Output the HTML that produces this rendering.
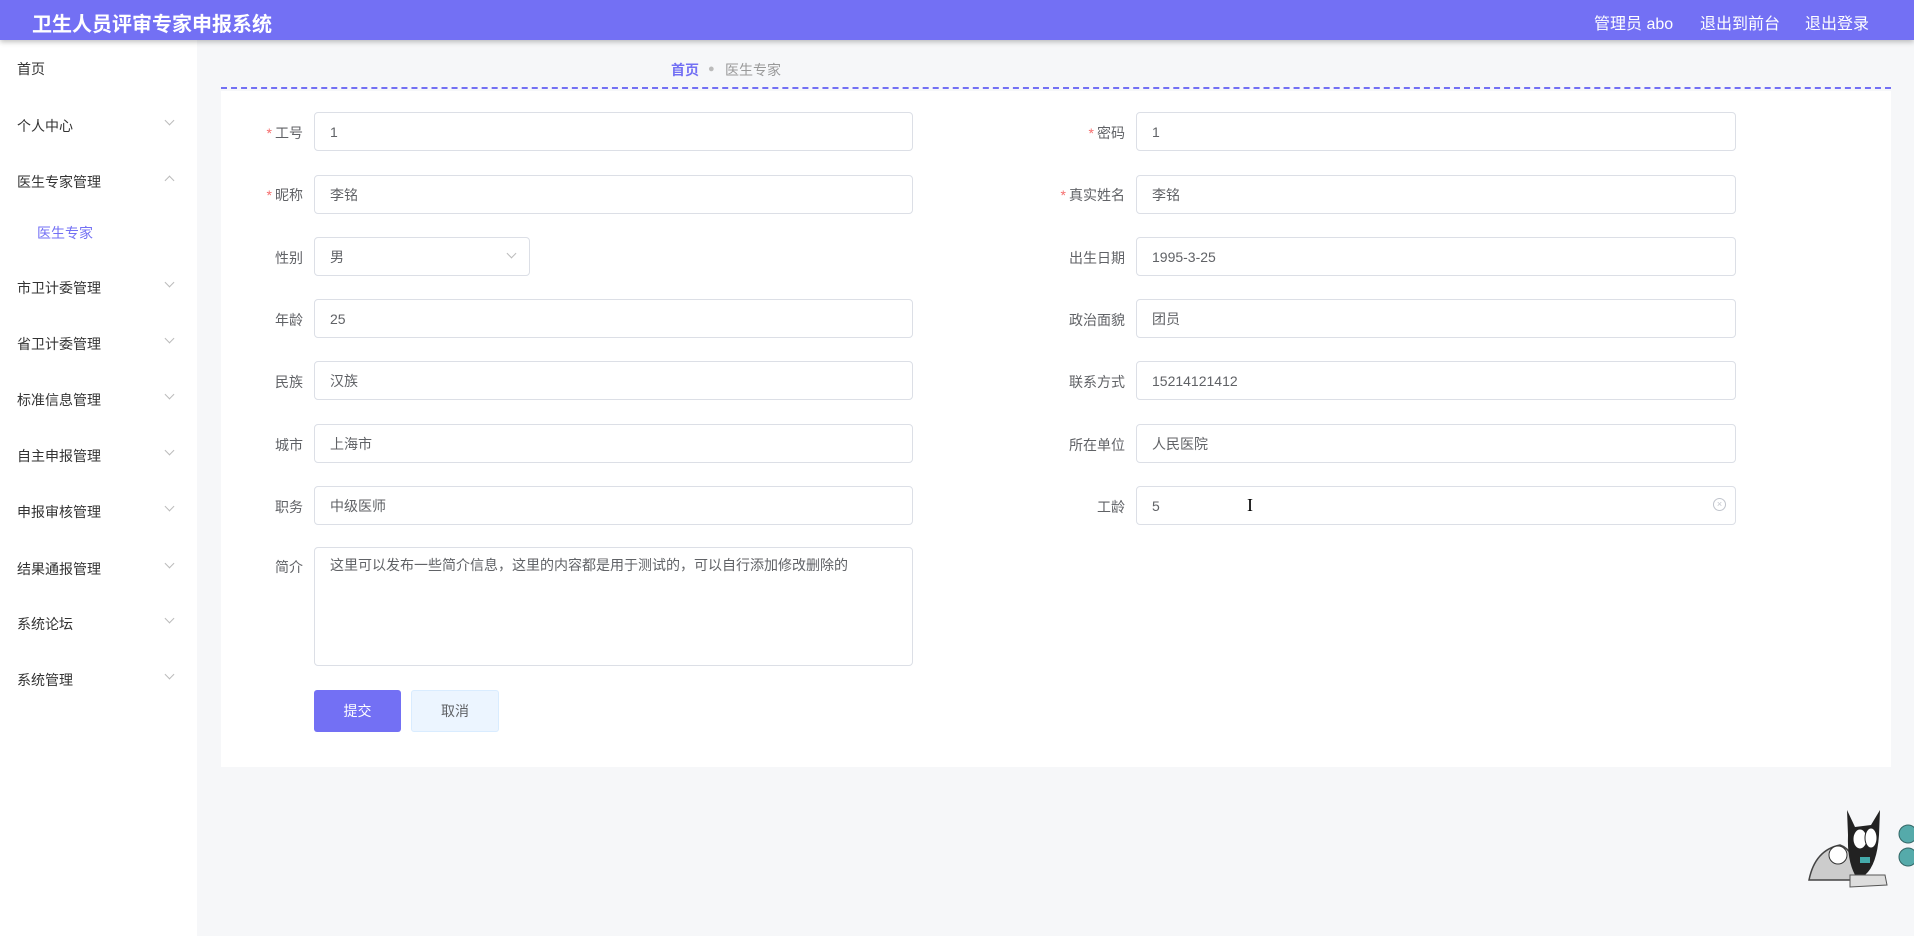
<!DOCTYPE html>
<html><head><meta charset="utf-8"><style>
*{box-sizing:border-box;margin:0;padding:0}
body{width:1914px;height:936px;background:#f6f7f9;font-family:"Liberation Sans","Noto Sans CJK SC",sans-serif;position:relative;overflow:hidden;color:#333}
.hd{position:absolute;left:0;top:0;width:1914px;height:40px;background:#7370f4;box-shadow:0 2px 5px rgba(0,0,0,.25);z-index:2}
.hd .t{position:absolute;left:32px;top:8px;color:#fff;font-size:20px;font-weight:bold}
.hd .r{position:absolute;top:10px;color:#fff;font-size:16px}
.sb{position:absolute;left:0;top:40px;width:197px;height:896px;background:#fff}
.mi{position:absolute;left:17px;font-size:14px;color:#333}
.ar{position:absolute;left:166px;width:7px;height:7px;border-right:1px solid #bbb;border-bottom:1px solid #bbb;transform:rotate(45deg)}
.bc{position:absolute;top:60px;font-size:14px}
.dash{position:absolute;left:221px;top:87px;width:1670px;border-top:2px dashed #7370f4}
.card{position:absolute;left:221px;top:91px;width:1670px;height:676px;background:#fff}
.lb{position:absolute;font-size:14px;color:#606266;text-align:right;width:120px}
.lb i{color:#f56c6c;font-style:normal;margin-right:3px}
.in{position:absolute;height:39px;border:1px solid #dcdfe6;border-radius:4px;background:#fff;font-size:14px;color:#606266;padding:10px 15px;line-height:18px}
.btn{position:absolute;top:690px;height:42px;border-radius:3px;font-size:14px;text-align:center;line-height:42px}
</style></head><body>
<div class="hd"><div class="t">卫生人员评审专家申报系统</div>
<div class="r" style="left:1594px">管理员 abo</div><div class="r" style="left:1700px">退出到前台</div><div class="r" style="left:1805px">退出登录</div></div>
<div class="sb">
<div class="mi" style="top:19px">首页</div>
<div class="mi" style="top:76px">个人中心</div><div class="ar" style="top:77px"></div>
<div class="mi" style="top:132px">医生专家管理</div><div class="ar" style="top:137px;transform:rotate(-135deg)"></div>
<div class="mi" style="top:183px;left:37px;color:#7370f4">医生专家</div>
<div class="mi" style="top:238px">市卫计委管理</div><div class="ar" style="top:239px"></div>
<div class="mi" style="top:294px">省卫计委管理</div><div class="ar" style="top:295px"></div>
<div class="mi" style="top:350px">标准信息管理</div><div class="ar" style="top:351px"></div>
<div class="mi" style="top:406px">自主申报管理</div><div class="ar" style="top:407px"></div>
<div class="mi" style="top:462px">申报审核管理</div><div class="ar" style="top:463px"></div>
<div class="mi" style="top:519px">结果通报管理</div><div class="ar" style="top:520px"></div>
<div class="mi" style="top:574px">系统论坛</div><div class="ar" style="top:575px"></div>
<div class="mi" style="top:630px">系统管理</div><div class="ar" style="top:631px"></div>
</div>
<div class="bc" style="left:671px;color:#7370f4;font-weight:bold">首页</div>
<div class="bc" style="left:708px;color:#bbb;font-size:11px;top:63px">●</div>
<div class="bc" style="left:725px;color:#999">医生专家</div>
<div class="dash"></div>
<div class="card"></div>

<div class="lb" style="left:183px;top:123px"><i>*</i>工号</div><div class="in" style="left:314px;top:112px;width:599px">1</div>
<div class="lb" style="left:1005px;top:123px"><i>*</i>密码</div><div class="in" style="left:1136px;top:112px;width:600px">1</div>
<div class="lb" style="left:183px;top:185px"><i>*</i>昵称</div><div class="in" style="left:314px;top:175px;width:599px">李铭</div>
<div class="lb" style="left:1005px;top:185px"><i>*</i>真实姓名</div><div class="in" style="left:1136px;top:175px;width:600px">李铭</div>
<div class="lb" style="left:183px;top:248px">性别</div><div class="in" style="left:314px;top:237px;width:216px">男<span style="position:absolute;right:14px;top:12px;width:7px;height:7px;border-right:1px solid #bbb;border-bottom:1px solid #bbb;transform:rotate(45deg)"></span></div>
<div class="lb" style="left:1005px;top:248px">出生日期</div><div class="in" style="left:1136px;top:237px;width:600px">1995-3-25</div>
<div class="lb" style="left:183px;top:310px">年龄</div><div class="in" style="left:314px;top:299px;width:599px">25</div>
<div class="lb" style="left:1005px;top:310px">政治面貌</div><div class="in" style="left:1136px;top:299px;width:600px">团员</div>
<div class="lb" style="left:183px;top:372px">民族</div><div class="in" style="left:314px;top:361px;width:599px">汉族</div>
<div class="lb" style="left:1005px;top:372px">联系方式</div><div class="in" style="left:1136px;top:361px;width:600px">15214121412</div>
<div class="lb" style="left:183px;top:435px">城市</div><div class="in" style="left:314px;top:424px;width:599px">上海市</div>
<div class="lb" style="left:1005px;top:435px">所在单位</div><div class="in" style="left:1136px;top:424px;width:600px">人民医院</div>
<div class="lb" style="left:183px;top:497px">职务</div><div class="in" style="left:314px;top:486px;width:599px">中级医师</div>
<div class="lb" style="left:1005px;top:497px">工龄</div><div class="in" style="left:1136px;top:486px;width:600px">5<span style="position:absolute;right:9px;top:11px;width:13px;height:13px;border:1px solid #c0c4cc;border-radius:50%;font-size:9px;line-height:11px;text-align:center;color:#c0c4cc">×</span><span style="position:absolute;left:110px;top:9px;font-size:18px;color:#000;font-family:'Liberation Serif',serif">I</span></div>
<div class="lb" style="left:183px;top:557px">简介</div><div class="in" style="left:314px;top:547px;width:599px;height:119px;padding:8px 15px">这里可以发布一些简介信息，这里的内容都是用于测试的，可以自行添加修改删除的</div>
<div class="btn" style="left:314px;width:87px;background:#7370f4;color:#fff">提交</div>
<div class="btn" style="left:411px;width:88px;background:#ecf5ff;border:1px solid #d9ecff;color:#606266;line-height:40px">取消</div>

<svg style="position:absolute;left:1805px;top:805px" width="109" height="95" viewBox="0 0 109 95">
<path d="M4 75 Q10 45 35 40 Q50 45 55 75 Z" fill="#ccc" stroke="#444" stroke-width="1.5"/>
<circle cx="33" cy="50" r="9" fill="#fff" stroke="#333"/>
<path d="M42 5 L50 22 L66 20 L75 5 L74 30 Q72 60 60 70 L50 70 Q42 55 43 30Z" fill="#222"/>
<ellipse cx="55" cy="34" rx="7" ry="10" fill="#fff" stroke="#222"/>
<ellipse cx="66" cy="33" rx="6" ry="10" fill="#fff" stroke="#222"/>
<rect x="55" y="52" width="10" height="6" fill="#4aa"/>
<circle cx="103" cy="29" r="9" fill="#5aa" stroke="#366"/>
<circle cx="103" cy="52" r="9" fill="#5aa" stroke="#366"/>
<path d="M45 70 L80 70 L82 80 L45 82Z" fill="#ddd" stroke="#555"/>
</svg>
</body></html>
